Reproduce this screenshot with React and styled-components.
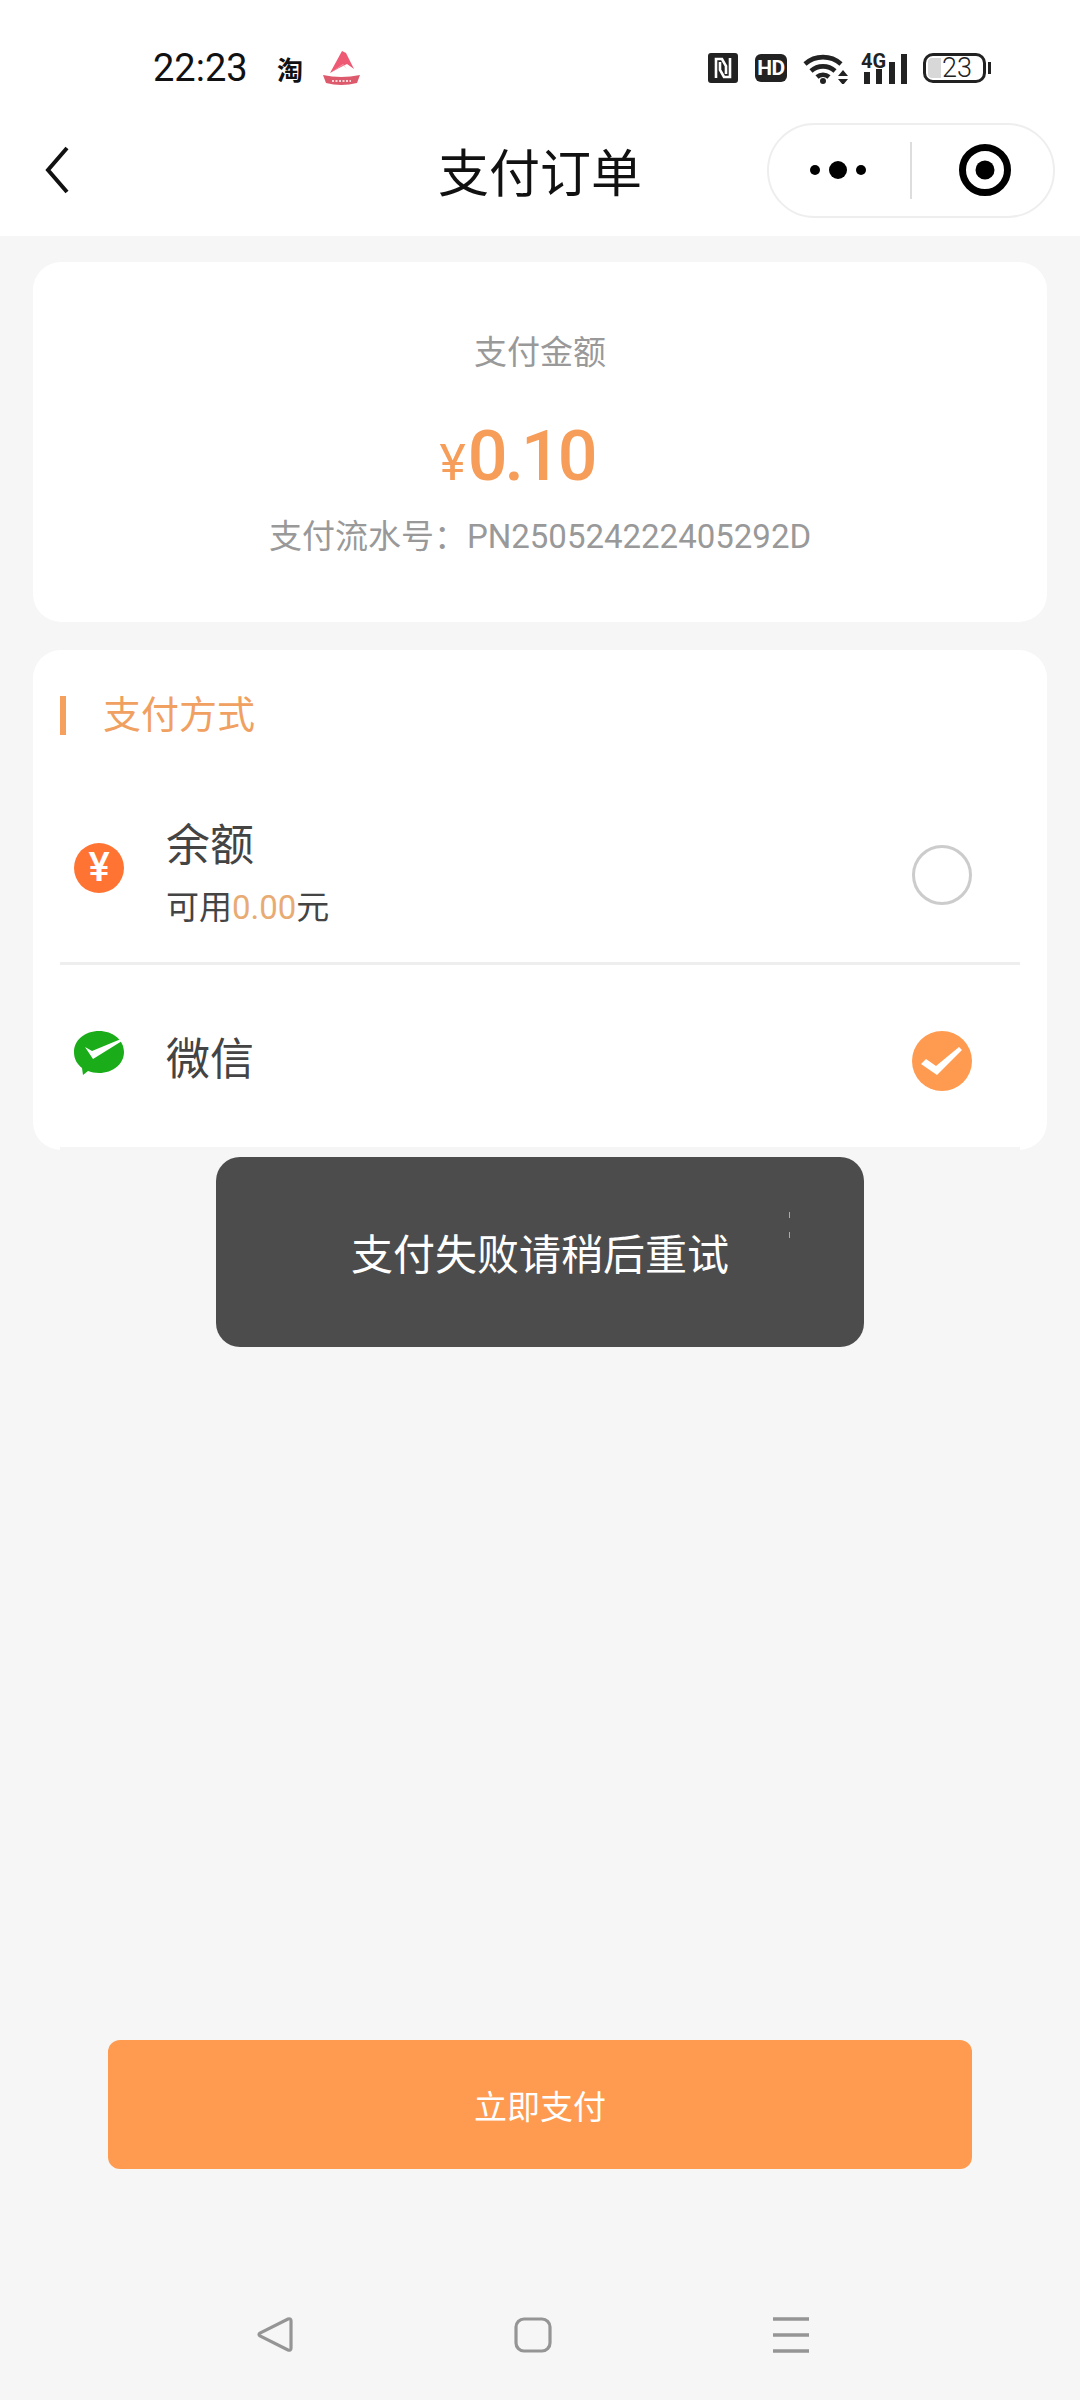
import React from 'react';
import styled, { createGlobalStyle } from 'styled-components';

const GlobalStyle = createGlobalStyle`
  html, body { margin: 0; padding: 0; background: #f6f6f6; }
  * { box-sizing: border-box; }
  body { font-family: Roboto, "Noto Sans CJK SC", sans-serif; }
`;

const Page = styled.div`
  position: relative;
  width: 1080px;
  height: 2400px;
  display: flex;
  flex-direction: column;
  background: #f6f6f6;
`;

const Header = styled.header`
  height: 236px;
  background: #fff;
  display: flex;
  flex-direction: column;
`;

const StatusBar = styled.div`
  height: 136px;
  margin-bottom: -20px;
  display: flex;
  align-items: center;
  justify-content: space-between;
  padding: 0 90px 0 153px;
`;

const StatusLeft = styled.div`
  display: flex;
  align-items: center;
`;

const Clock = styled.span`
  font-size: 38px;
  color: #111;
  width: 124px;
`;

const Tao = styled.span`
  font-size: 26px;
  font-weight: 700;
  color: #111;
  width: 46px;
`;

const StatusRight = styled.div`
  display: flex;
  align-items: center;
`;

const HdBadge = styled.span`
  width: 32px;
  height: 28px;
  margin: 0 16px 0 17px;
  border-radius: 6px;
  background: #222;
  color: #fff;
  font-size: 21px;
  font-weight: 700;
  letter-spacing: -0.5px;
  line-height: 28px;
  text-align: center;
`;

const Signal = styled.div`
  position: relative;
  width: 46px;
  height: 32px;
  margin: 0 16px 0 13px;
`;

const SignalLabel = styled.span`
  position: absolute;
  left: 0;
  top: 0;
  font-size: 20px;
  font-weight: 700;
  line-height: 18px;
  color: #222;
`;

const Battery = styled.div`
  position: relative;
  width: 63px;
  height: 30px;
  margin-right: 4px;
  border: 3px solid #222;
  border-radius: 10px;
  padding-left: 16px;
  font-size: 27px;
  font-weight: 300;
  line-height: 24px;
  color: #222;
  &::before {
    content: '';
    position: absolute;
    left: 2px;
    top: 2px;
    bottom: 2px;
    width: 13px;
    background: #d8d8d8;
    border-radius: 4px 0 0 4px;
  }
  &::after {
    content: '';
    position: absolute;
    right: -8px;
    top: 6px;
    width: 3px;
    height: 12px;
    background: #222;
  }
`;

const NavBar = styled.div`
  flex: 1;
  display: grid;
  grid-template-columns: 1fr auto 1fr;
  align-items: center;
  padding: 0 25px 12px;
`;

const BackButton = styled.svg`
  display: block;
  margin-left: 17px;
`;

const NavTitle = styled.h1`
  margin: 0;
  font-size: 51px;
  font-weight: 400;
  color: #111;
`;

const Capsule = styled.div`
  justify-self: end;
  width: 288px;
  height: 95px;
  border: 2px solid #eee;
  border-radius: 48px;
  display: flex;
  align-items: center;
  padding-left: 41px;
`;

const CapsuleDivider = styled.span`
  width: 2px;
  height: 57px;
  margin: 0 46px 0 34px;
  background: #ddd;
`;

const Main = styled.main`
  flex: 1;
  display: flex;
  flex-direction: column;
  gap: 28px;
  padding: 26px 33px 0;
`;

const Card = styled.section`
  border-radius: 28px;
  background: #fff;
`;

const AmountCard = styled(Card)`
  height: 360px;
  display: flex;
  flex-direction: column;
  align-items: center;
  padding-top: 67px;
  color: #999;
  font-size: 33px;
  line-height: 48px;
`;

const Amount = styled.div`
  display: flex;
  align-items: baseline;
  margin: 40px 46px 0 0;
  color: #f59d59;
  height: 78px;
  line-height: 78px;
`;

const AmountSign = styled.span`
  font-size: 50px;
  margin-right: 2px;
`;

const AmountValue = styled.span`
  font-size: 70px;
  font-weight: 500;
  letter-spacing: -3px;
`;

const Serial = styled.div`
  margin-top: 18px;
`;

const PayCard = styled(Card)`
  height: 500px;
  padding: 40px 27px 0;
`;

const SectionTitle = styled.h2`
  margin: 0 0 18px;
  height: 50px;
  font-size: 38px;
  line-height: 50px;
  font-weight: 400;
  color: #f0a060;
  display: flex;
  align-items: center;
  gap: 37px;
  &::before {
    content: '';
    width: 6px;
    height: 39px;
    background: #f5a05e;
  }
`;

const PayRow = styled.div`
  height: ${({ $h }) => $h}px;
  border-bottom: 3px solid ${({ $last }) => ($last ? '#f5f5f5' : '#eee')};
  display: flex;
  align-items: flex-start;
  padding: ${({ $top }) => $top}px 48px 0 14px;
`;

const MethodIcon = styled.div`
  flex: none;
  width: 50px;
  height: 50px;
  margin-top: ${({ $mt }) => $mt}px;
`;

const YenCircle = styled(MethodIcon)`
  border-radius: 50%;
  background: #ff7433;
  color: #fff;
  font-size: 40px;
  font-weight: 500;
  line-height: 50px;
  text-align: center;
`;

const WechatSvg = styled(MethodIcon).attrs({ as: 'svg' })`
  height: 45px;
`;

const MethodText = styled.div`
  flex: 1;
  margin-left: 42px;
  color: #444;
`;

const MethodName = styled.div`
  font-size: 44px;
  line-height: 60px;
`;

const MethodSub = styled.div`
  font-size: 33px;
  line-height: 44px;
  margin-top: 10px;
  em {
    font-style: normal;
    color: #e8ab74;
  }
`;

const Radio = styled.span`
  flex: none;
  width: 60px;
  height: 60px;
  border-radius: 50%;
  margin-top: ${({ $mt }) => $mt}px;
  border: ${({ $on }) => ($on ? 'none' : '3px solid #ccc')};
  background: ${({ $on }) => ($on ? '#ff9b50' : '#fff')};
`;

const PayButton = styled.button`
  display: block;
  flex: none;
  width: 864px;
  height: 129px;
  margin: auto 0 0 75px;
  border: none;
  border-radius: 12px;
  background: #ff9b50;
  color: #fff;
  font-family: inherit;
  font-size: 33px;
`;

const BottomNav = styled.nav`
  flex: none;
  height: 203px;
  margin: 0 -33px;
  padding: 120px 271px 0 257px;
  display: flex;
  align-items: flex-start;
  justify-content: space-between;
`;

const Toast = styled.div`
  position: absolute;
  left: 216px;
  top: 1157px;
  width: 648px;
  height: 190px;
  padding-bottom: 2px;
  border-radius: 24px;
  background: #4c4c4c;
  color: #fff;
  font-size: 42px;
  display: flex;
  align-items: center;
  justify-content: center;
`;

const ToastSpeck = styled.i`
  position: absolute;
  left: 573px;
  top: ${({ $top }) => $top}px;
  width: 1px;
  height: 6px;
  background: #aaa;
`;

const PaperBoat = () => (
  <svg width="38" height="36" viewBox="0 0 38 36">
    <path d="M19 1 L7 23 L16 18 L24 14 L31 19 L23 3 Z" fill="#ee5a74" />
    <path d="M7 23 L20 14 L24 19 L20 15 Z" fill="#f7a0ae" />
    <path d="M0 25 Q18 29 37 25 L34 33 Q18 37 3 33 Z" fill="#dd5a6c" />
    <path d="M9 31 H28" stroke="#f9d5da" strokeWidth="2" strokeDasharray="2 1.5" />
  </svg>
);

const NfcIcon = () => (
  <svg width="30" height="30" viewBox="0 0 30 30">
    <rect width="30" height="30" rx="3" fill="#222" />
    <path d="M8 25V6h6l4 7v8M22 5v19h-6l-4-7V9" fill="none" stroke="#fff" strokeWidth="2.6" />
  </svg>
);

const WifiIcon = () => (
  <svg width="45" height="32" viewBox="0 0 45 32">
    <g fill="none" stroke="#222" strokeWidth="4.6">
      <path d="M2 12 A27 27 0 0 1 38 12" />
      <path d="M8 19 A18 18 0 0 1 32 19" />
      <path d="M14 25 A9 9 0 0 1 26 25" />
    </g>
    <circle cx="20" cy="29" r="3" fill="#222" />
    <path d="M35 24h10l-5-6zM35 27h10l-5 6z" fill="#222" />
  </svg>
);

const SignalIcon = () => (
  <Signal>
    <SignalLabel>4G</SignalLabel>
    <svg width="46" height="32" viewBox="0 0 46 32">
      <rect x="3" y="20" width="6" height="12" fill="#222" />
      <rect x="15" y="17" width="6" height="15" fill="#222" />
      <rect x="28" y="10" width="6" height="22" fill="#222" />
      <rect x="40" y="2" width="6" height="30" fill="#222" />
    </svg>
  </Signal>
);

const CheckMark = () => (
  <svg width="60" height="60" viewBox="0 0 60 60">
    <path d="M9 33 L14 28 L24 35 L47 16 L50 19 L25 44 Z" fill="#fff" />
  </svg>
);

const WechatIcon = ({ mt }) => (
  <WechatSvg $mt={mt} viewBox="0 0 50 45">
    <path d="M25 0 C39 0 50 9 50 21 C50 33 39 42 25 42 C21 42 17 41 14 40 L9 44 L8 37 C3 33 0 28 0 21 C0 9 11 0 25 0 Z" fill="#1aad19" />
    <path d="M11 16 L18 20 L47 8 L48 10 L19 28 Z" fill="#fff" />
  </WechatSvg>
);

const App = () => {
  return (
    <Page>
      <GlobalStyle />
      <Header>
        <StatusBar>
          <StatusLeft>
            <Clock>22:23</Clock>
            <Tao>淘</Tao>
            <PaperBoat />
          </StatusLeft>
          <StatusRight>
            <NfcIcon />
            <HdBadge>HD</HdBadge>
            <WifiIcon />
            <SignalIcon />
            <Battery>23</Battery>
          </StatusRight>
        </StatusBar>
        <NavBar>
          <BackButton width="28" height="48" viewBox="0 0 28 48">
            <path d="M25 2 L6 24 L25 46" fill="none" stroke="#111" strokeWidth="4" />
          </BackButton>
          <NavTitle>支付订单</NavTitle>
          <Capsule>
            <svg width="66" height="20" viewBox="0 0 66 20">
              <circle cx="5" cy="10" r="5" fill="#000" />
              <circle cx="28" cy="10" r="9" fill="#000" />
              <circle cx="51" cy="10" r="5" fill="#000" />
            </svg>
            <CapsuleDivider />
            <svg width="54" height="54" viewBox="0 0 54 54">
              <circle cx="27" cy="27" r="22.5" fill="none" stroke="#000" strokeWidth="7" />
              <circle cx="27" cy="27" r="9.5" fill="#000" />
            </svg>
          </Capsule>
        </NavBar>
      </Header>
      <Main>
        <AmountCard>
          <div>支付金额</div>
          <Amount>
            <AmountSign>¥</AmountSign>
            <AmountValue>0.10</AmountValue>
          </Amount>
          <Serial>支付流水号：PN250524222405292D</Serial>
        </AmountCard>
        <PayCard>
          <SectionTitle>支付方式</SectionTitle>
          <PayRow $h={207} $top={58}>
            <YenCircle $mt={27}>¥</YenCircle>
            <MethodText>
              <MethodName>余额</MethodName>
              <MethodSub>可用<em>0.00</em>元</MethodSub>
            </MethodText>
            <Radio $mt={29} />
          </PayRow>
          <PayRow $h={185} $top={65} $last>
            <WechatIcon mt={1} />
            <MethodText>
              <MethodName>微信</MethodName>
            </MethodText>
            <Radio $on $mt={1}>
              <CheckMark />
            </Radio>
          </PayRow>
        </PayCard>
        <PayButton>立即支付</PayButton>
        <BottomNav>
          <svg width="36" height="35" viewBox="0 0 36 35">
            <path d="M31 2 Q34 1 34 4 V31 Q34 34 31 33 L3 19 Q1 17.500 3 16 Z" fill="none" stroke="#959595" strokeWidth="3.2" />
          </svg>
          <svg width="38" height="36" viewBox="0 0 38 36">
            <rect x="2" y="2" width="34" height="32" rx="8" fill="none" stroke="#959595" strokeWidth="3.2" />
          </svg>
          <svg width="36" height="36" viewBox="0 0 36 36">
            <path d="M0 2h36M0 18h36M0 34h36" stroke="#959595" strokeWidth="3.4" />
          </svg>
        </BottomNav>
      </Main>
      <Toast>
        支付失败请稍后重试
        <ToastSpeck $top={55} />
        <ToastSpeck $top={75} />
      </Toast>
    </Page>
  );
};

export default App;
